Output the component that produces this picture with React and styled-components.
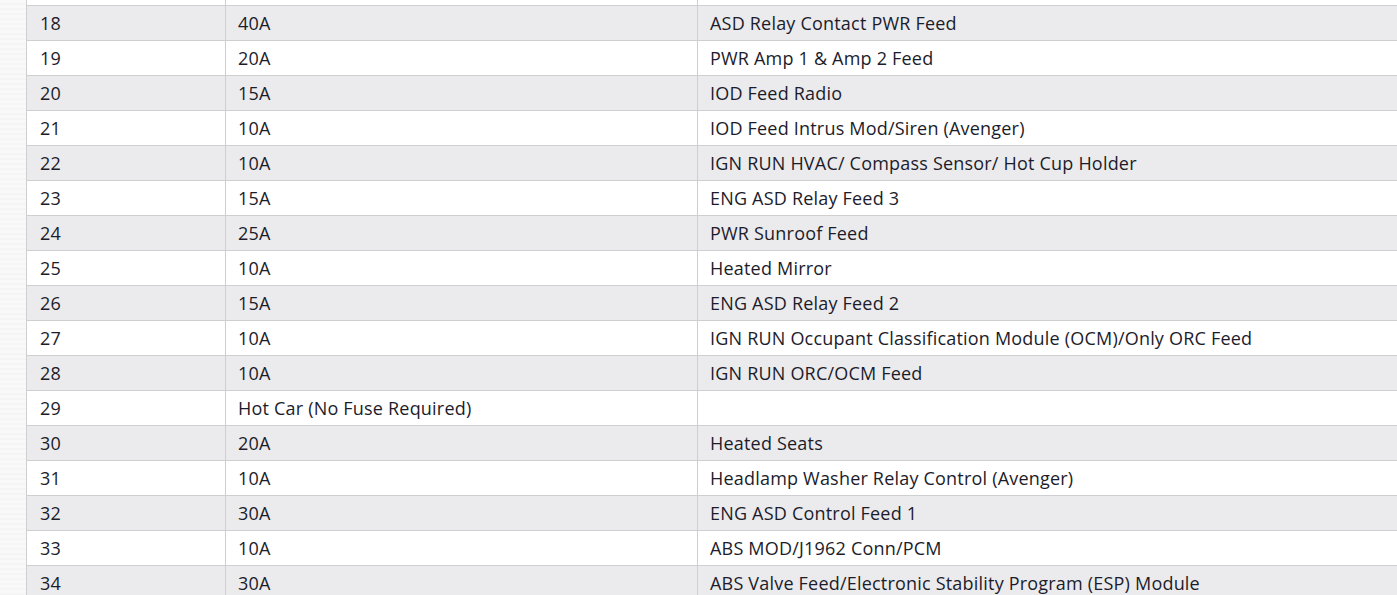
import React from "react";
import styled, { createGlobalStyle } from "styled-components";

const GlobalStyle = createGlobalStyle`
    html, body {
        margin: 0;
        padding: 0;
        overflow: hidden;
        background: #ffffff;
    }
`

const Page = styled.div`
    display: flex;
    height: 595px;
    overflow: hidden;
    background: #ffffff;
`

const Side = styled.div`
    flex: 0 0 26px;
    background-color: #f9f9f9;
    background-image: repeating-linear-gradient(0deg, rgba(0,0,0,0.015) 0 2px, transparent 2px 5px);
`

const TableWrap = styled.div`
    flex: 1 0 auto;
    margin-top: -30px;
`

const Table = styled.table`
    border-collapse: collapse;
    width: 1420px;
    table-layout: fixed;
    font-family: "Open Sans", "Noto Sans", sans-serif;
    font-size: 18px;
    letter-spacing: 0.2px;
    color: #1c1c2b;
`

const Row = styled.tr`
    background: ${p => (p.$shade ? "#ebebed" : "#ffffff")};
`

const Cell = styled.td`
    height: 35px;
    box-sizing: border-box;
    padding: 0 0 0 ${p => (p.$first ? "13px" : "12px")};
    border: 1px solid #cfcfd1;
    vertical-align: middle;
    white-space: nowrap;
    line-height: 20px;
`

// row 17 only peeks in at the top edge, so its cells stay empty
const fuses = [
    [17, "", ""],
    [18, "40A", "ASD Relay Contact PWR Feed"],
    [19, "20A", "PWR Amp 1 & Amp 2 Feed"],
    [20, "15A", "IOD Feed Radio"],
    [21, "10A", "IOD Feed Intrus Mod/Siren (Avenger)"],
    [22, "10A", "IGN RUN HVAC/ Compass Sensor/ Hot Cup Holder"],
    [23, "15A", "ENG ASD Relay Feed 3"],
    [24, "25A", "PWR Sunroof Feed"],
    [25, "10A", "Heated Mirror"],
    [26, "15A", "ENG ASD Relay Feed 2"],
    [27, "10A", "IGN RUN Occupant Classification Module (OCM)/Only ORC Feed"],
    [28, "10A", "IGN RUN ORC/OCM Feed"],
    [29, "Hot Car (No Fuse Required)", ""],
    [30, "20A", "Heated Seats"],
    [31, "10A", "Headlamp Washer Relay Control (Avenger)"],
    [32, "30A", "ENG ASD Control Feed 1"],
    [33, "10A", "ABS MOD/J1962 Conn/PCM"],
    [34, "30A", "ABS Valve Feed/Electronic Stability Program (ESP) Module"],
]

function App() {
    return (
        <Page>
            <GlobalStyle />
            <Side />
            <TableWrap>
                <Table>
                    <colgroup>
                        <col style={{ width: "199px" }} />
                        <col style={{ width: "472px" }} />
                        <col />
                    </colgroup>
                    <tbody>
                        {fuses.map(([num, amp, desc]) => (
                            <Row key={num} $shade={num % 2 === 0}>
                                <Cell $first>{amp || desc ? num : ""}</Cell>
                                <Cell>{amp}</Cell>
                                <Cell>{desc}</Cell>
                            </Row>
                        ))}
                    </tbody>
                </Table>
            </TableWrap>
        </Page>
    )
}

export default App
